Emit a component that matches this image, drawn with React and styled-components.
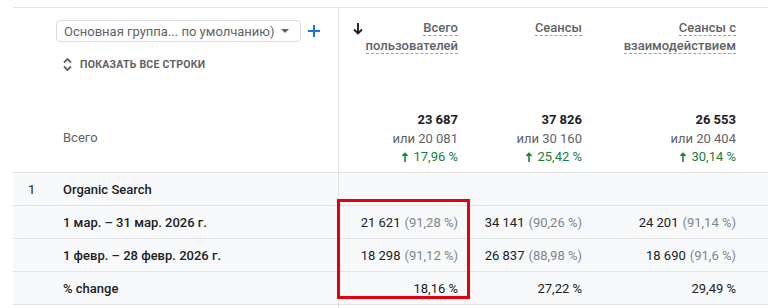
import React from "react";
import styled, { createGlobalStyle } from "styled-components";

const GlobalStyle = createGlobalStyle`
  html, body {
    margin: 0;
    padding: 0;
    background: #ffffff;
  }
  body {
    font-family: Roboto, "Noto Sans", Arial, sans-serif;
    color: #202124;
    width: 768px;
    height: 308px;
    overflow: hidden;
  }
`;

const Page = styled.div`
  padding: 7px 0 0 13px;
  position: relative;
`;

const Grid = styled.div`
  display: grid;
  grid-template-columns: 325px 132px 124px 154px 1fr;
  border-top: 1px solid #e3e3e3;
`;

const Row = styled.div`
  display: contents;
`;

const DimHead = styled.div`
  height: 89px;
  padding: 12px 0 0 43px;
  box-sizing: border-box;
`;

const Toolbar = styled.div`
  display: flex;
  align-items: center;
  gap: 7px;
`;

const Select = styled.div`
  width: 245px;
  height: 22px;
  box-sizing: border-box;
  border: 1px solid #dadce0;
  border-radius: 4px;
  display: flex;
  align-items: center;
  justify-content: space-between;
  padding: 0 11px 0 7px;
  font-size: 13px;
  color: #5f6368;
`;

const Caret = styled.span`
  width: 0;
  height: 0;
  border-left: 4px solid transparent;
  border-right: 4px solid transparent;
  border-top: 4px solid #5f6368;
`;

const ShowAll = styled.div`
  display: flex;
  align-items: center;
  gap: 8px;
  margin: 16px 0 0 7px;
  font-size: 10.5px;
  font-weight: 700;
  letter-spacing: 0.25px;
  color: #5f6368;
`;

const MetricHead = styled.div`
  height: 89px;
  box-sizing: border-box;
  padding: 11px 12px 0 12px;
  display: flex;
  justify-content: space-between;
  align-items: flex-start;
  border-left: ${({ $first }) => ($first ? "1px solid #e3e3e3" : "none")};
`;

const HeadTitle = styled.div`
  text-align: right;
  font-size: 13px;
  font-weight: 500;
  line-height: 18px;
  color: #5f6368;
  margin-left: auto;

  span {
    border-bottom: 1px dashed #9aa0a6;
  }
`;

const SortArrow = styled.div`
  margin: 4px 0 0 2px;
  display: flex;
`;

const DimTotal = styled.div`
  height: 75px;
  box-sizing: border-box;
  padding: 33px 0 0 50px;
  font-size: 13px;
  color: #5f6368;
`;

const MetricTotal = styled.div`
  height: 75px;
  box-sizing: border-box;
  padding: 14px 12px 0 0;
  text-align: right;
  font-size: 13px;
  line-height: 18.5px;
  border-left: ${({ $first }) => ($first ? "1px solid #e3e3e3" : "none")};
`;

const TotalValue = styled.div`
  font-weight: 700;
  color: #202124;
`;

const TotalCompare = styled.div`
  color: #5f6368;
`;

const TotalChange = styled.div`
  color: #188038;
  display: flex;
  justify-content: flex-end;
  align-items: center;
  gap: 5px;
`;

const Cell = styled.div`
  height: ${({ $spacer }) => ($spacer ? "5px" : "33px")};
  box-sizing: border-box;
  border-top: 1px solid #e3e3e3;
  background: ${({ $spacer }) => ($spacer ? "#ffffff" : "#f8f9fa")};
  display: flex;
  align-items: center;
  font-size: 13px;
  color: #202124;
  justify-content: ${({ $num }) => ($num ? "flex-end" : "flex-start")};
  padding: ${({ $num }) => ($num ? "0 12px 0 0" : "0")};
  border-left: ${({ $first }) => ($first ? "1px solid #e3e3e3" : "none")};
`;

const Index = styled.span`
  width: 50px;
  padding-left: 15px;
  box-sizing: border-box;
  color: #202124;
`;

const Label = styled.span`
  font-weight: 500;
  color: #202124;
`;

const Share = styled.span`
  color: #80868b;
  margin-left: 4px;
`;

const Highlight = styled.div`
  position: absolute;
  left: 337px;
  top: 199px;
  width: 133px;
  height: 100px;
  box-sizing: border-box;
  border: 3px solid #e4000f;
  pointer-events: none;
`;

const metrics = [
  { title: ["Всего", "пользователей"], total: "23 687", prev: "или 20 081", change: "17,96 %", sort: true },
  { title: ["Сеансы"], total: "37 826", prev: "или 30 160", change: "25,42 %" },
  { title: ["Сеансы с", "взаимодействием"], total: "26 553", prev: "или 20 404", change: "30,14 %" },
];

const rows = [
  { label: "1 мар. – 31 мар. 2026 г.", values: [["21 621", "(91,28 %)"], ["34 141", "(90,26 %)"], ["24 201", "(91,14 %)"]] },
  { label: "1 февр. – 28 февр. 2026 г.", values: [["18 298", "(91,12 %)"], ["26 837", "(88,98 %)"], ["18 690", "(91,6 %)"]] },
  { label: "% change", values: [["18,16 %"], ["27,22 %"], ["29,49 %"]] },
];

function UnfoldIcon() {
  return (
    <svg width="9" height="13" viewBox="0 0 9 13">
      <path d="M1 4.5 L4.5 1 L8 4.5 M1 8.5 L4.5 12 L8 8.5" fill="none" stroke="#5f6368" strokeWidth="1.8" />
    </svg>
  );
}

function PlusIcon() {
  return (
    <svg width="12" height="12" viewBox="0 0 12 12">
      <path d="M6 0 V12 M0 6 H12" stroke="#1a73e8" strokeWidth="2" />
    </svg>
  );
}

function DownArrow() {
  return (
    <svg width="10" height="12" viewBox="0 0 10 12">
      <path d="M5 0 V10.5 M1 6.5 L5 10.5 L9 6.5" fill="none" stroke="#202124" strokeWidth="1.9" />
    </svg>
  );
}

function UpArrow() {
  return (
    <svg width="6" height="10" viewBox="0 0 6 10">
      <path d="M3 10 V1.5 M0.5 4 L3 1.5 L5.5 4" fill="none" stroke="#188038" strokeWidth="1.6" />
    </svg>
  );
}

export default function App() {
  return (
    <>
      <GlobalStyle />
      <Page>
        <Grid>
          <Row>
            <DimHead>
              <Toolbar>
                <Select>
                  <span>Основная группа... по умолчанию)</span>
                  <Caret />
                </Select>
                <PlusIcon />
              </Toolbar>
              <ShowAll>
                <UnfoldIcon />
                ПОКАЗАТЬ ВСЕ СТРОКИ
              </ShowAll>
            </DimHead>
            {metrics.map((m, i) => (
              <MetricHead key={i} $first={i === 0}>
                {m.sort && (
                  <SortArrow>
                    <DownArrow />
                  </SortArrow>
                )}
                <HeadTitle>
                  {m.title.map((t, j) => (
                    <div key={j}>
                      <span>{t}</span>
                    </div>
                  ))}
                </HeadTitle>
              </MetricHead>
            ))}
            <div />
          </Row>
          <Row>
            <DimTotal>Всего</DimTotal>
            {metrics.map((m, i) => (
              <MetricTotal key={i} $first={i === 0}>
                <TotalValue>{m.total}</TotalValue>
                <TotalCompare>{m.prev}</TotalCompare>
                <TotalChange>
                  <UpArrow />
                  {m.change}
                </TotalChange>
              </MetricTotal>
            ))}
            <div />
          </Row>
          <Row>
            <Cell>
              <Index>1</Index>
              <Label>Organic Search</Label>
            </Cell>
            <Cell $first />
            <Cell />
            <Cell />
            <Cell />
          </Row>
          {rows.map((r, i) => (
            <Row key={i}>
              <Cell>
                <Index />
                <Label>{r.label}</Label>
              </Cell>
              {r.values.map((v, j) => (
                <Cell key={j} $num $first={j === 0}>
                  {v[0]}
                  {v[1] && <Share>{v[1]}</Share>}
                </Cell>
              ))}
              <Cell />
            </Row>
          ))}
          <Row>
            <Cell $spacer />
            <Cell $spacer $first />
            <Cell $spacer />
            <Cell $spacer />
            <Cell $spacer />
          </Row>
        </Grid>
        <Highlight />
      </Page>
    </>
  );
}
